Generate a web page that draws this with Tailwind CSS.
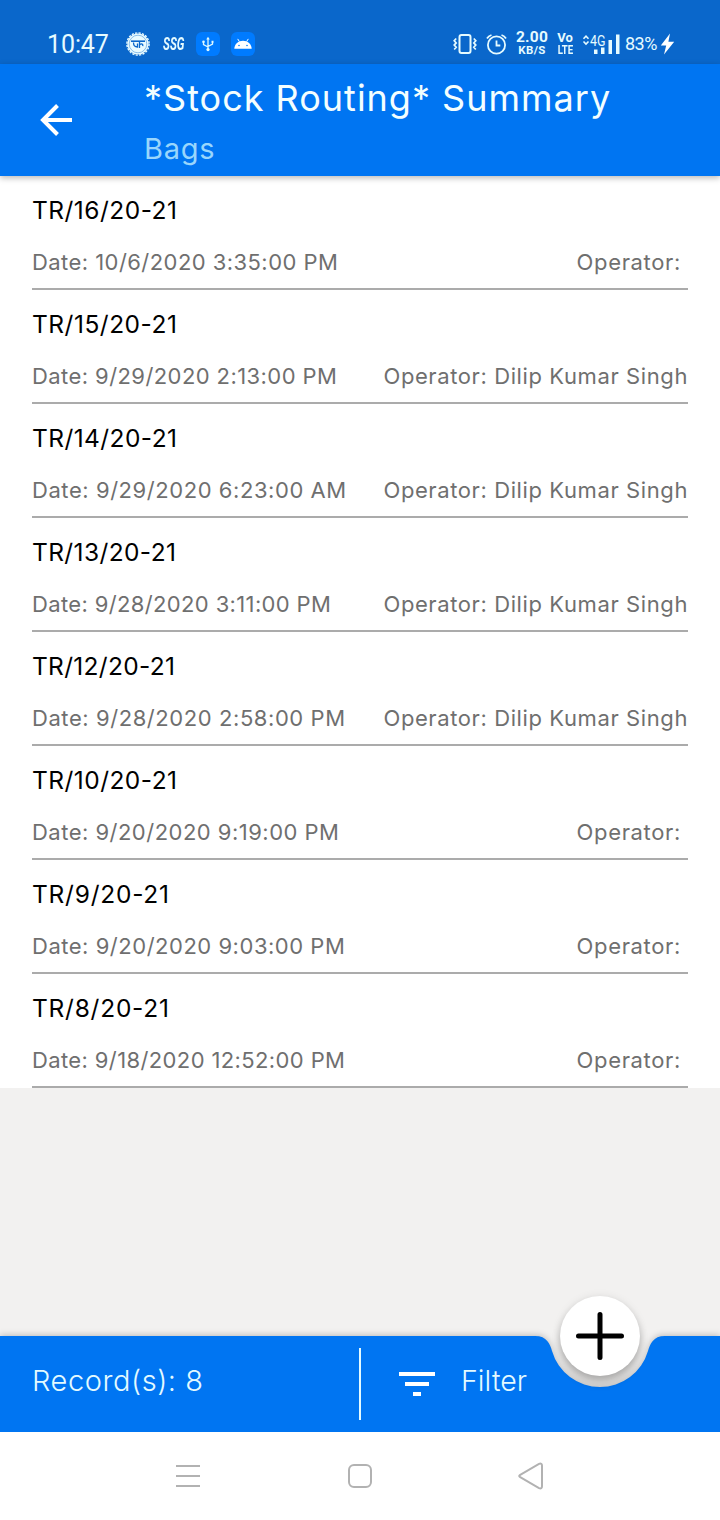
<!DOCTYPE html>
<html lang="en">
<head>
    <meta charset="UTF-8">
    <meta name="viewport" content="width=device-width, initial-scale=1.0">
    <title>Stock Routing Summary</title>
    <script src="https://cdn.jsdelivr.net/npm/@tailwindcss/browser@4"></script>
</head>
<body class="w-[720px] h-[1520px] flex flex-col overflow-hidden bg-[#f2f1f0] font-['Inter',sans-serif]">

    <!-- Status bar -->
    <div class="h-16 pt-6 pl-12 pr-[45px] flex items-center justify-between shrink-0 bg-[#0a67cb] text-[#e6fbff] font-['Roboto',sans-serif]">
        <div class="flex items-center">
            <span class="w-[79px] -ml-px text-[25px] leading-none tracking-[-0.1px] whitespace-nowrap">10:47</span>
            <svg class="w-6 h-6" viewBox="0 0 24 24">
                <circle cx="12" cy="12" r="10.6" fill="#e9fbff"/>
                <circle cx="12" cy="12" r="11.1" fill="none" stroke="#e9fbff" stroke-width="1.4" stroke-dasharray="2.200 1.300"/>
                <circle cx="12" cy="12" r="8.800" fill="none" stroke="#4a93dc" stroke-width=".6"/>
                <path d="M5 9.200h14" stroke="#0a67cb" stroke-width="1.600"/>
                <path d="M7.500 10.500c0 3.500 1.500 4.500 4 4.500V11.500M13.500 10v6M14 12.500c1.500-1.200 3.200-.5 2.800 1.700" fill="none" stroke="#0a67cb" stroke-width="1.300"/>
            </svg>
            <span class="ml-[13px] w-[21px] text-[18px] leading-none font-bold italic whitespace-nowrap"><span class="inline-block origin-left scale-x-[.64]">SSG</span></span>
            <div class="ml-3 w-6 h-6 rounded-md bg-[#007bff] flex items-center justify-center">
                <svg class="w-4 h-4" viewBox="0 0 16 16" fill="none" stroke="#dff9ff" stroke-width="1.3">
                    <path d="M8 2.500V13M3.500 6v2.500L8 11M12.500 6v2L8 10.500"/>
                    <path d="M8 .8l1.800 2.700H6.200zM11.500 4.700h2v2h-2z" fill="#dff9ff" stroke="none"/>
                    <circle cx="3.500" cy="5.700" r="1.300" fill="#dff9ff" stroke="none"/>
                    <circle cx="8" cy="13.600" r="1.600" fill="#dff9ff" stroke="none"/>
                </svg>
            </div>
            <div class="ml-[11px] w-6 h-6 rounded-md bg-[#007bff] flex items-center justify-center">
                <svg class="w-[18px] h-[12px]" viewBox="0 0 18 12">
                    <path d="M5.300 3.500L3.700.9M12.700 3.500L14.300.9" stroke="#fff" stroke-width="1" fill="none"/>
                    <path d="M.3 10.700C.6 5.800 4.300 2.700 9 2.700s8.400 3.100 8.700 8z" fill="#fff"/>
                    <circle cx="5" cy="7.500" r=".8" fill="#007bff"/><circle cx="13" cy="7.500" r=".8" fill="#007bff"/>
                </svg>
            </div>
        </div>
        <div class="flex items-center">
            <svg class="w-6 h-6" viewBox="0 0 24 24" fill="none" stroke="#e6fbff">
                <rect x="6.500" y="3" width="11" height="18" rx="2" stroke-width="2"/>
                <path d="M3.200 6.500l-2 2.200 2 2.200-2 2.200 2 2.200-2 2.200M20.800 6.500l2 2.200-2 2.200 2 2.200-2 2.200 2 2.200" stroke-width="1.700"/>
            </svg>
            <svg class="ml-2 w-[23px] h-6" viewBox="0 0 23 24" fill="none" stroke="#e6fbff" stroke-width="1.800">
                <circle cx="11.500" cy="13" r="8.600"/>
                <path d="M11.500 8.500v5h3.800M2 6.500Q3.500 4 6.500 3M21 6.500Q19.500 4 16.500 3"/>
            </svg>
            <div class="ml-2 w-[32px] flex flex-col items-center font-bold whitespace-nowrap">
                <span class="text-[15.500px] leading-[14px] tracking-[.2px] -mt-1">2.00</span>
                <span class="text-[11.500px] leading-[12px] tracking-[.4px] -mb-0.5">KB/S</span>
            </div>
            <div class="ml-[9px] w-[16px] flex flex-col items-center font-bold whitespace-nowrap">
                <span class="text-[13px] leading-[12px] -mt-1">Vo</span>
                <span class="text-[13px] leading-[12px] scale-x-[.74] -mb-1">LTE</span>
            </div>
            <svg class="ml-[9px] w-[39px] h-6" viewBox="0 0 39 24" fill="#e6fbff">
                <path d="M1.500 6.700L4 4.200l2.500 2.500M1.500 9.500L4 12l2.500-2.500" fill="none" stroke="#e6fbff" stroke-width="1.600"/>
                <text x="8" y="14" font-size="15" textLength="15.500" lengthAdjust="spacingAndGlyphs">4G</text>
                <path d="M12 17.500h3.500V22H12zM19 15.500h3.500V22H19zM26.500 8H30v14h-3.500zM34 2.500h3.500V22H34z"/>
            </svg>
            <span class="ml-1 w-[33px] text-[18px] leading-none tracking-[-0.500px] whitespace-nowrap">83%</span>
            <svg class="ml-[2px] w-[15px] h-6" viewBox="0 0 15 24" fill="#fff">
                <path d="M10 1.500L.8 13.500h5.400L4 22.500 14.200 9.800H8.400z"/>
            </svg>
        </div>
    </div>

    <!-- App bar -->
    <header class="relative z-10 h-28 pl-10 flex shrink-0 bg-[#0075f2] shadow-[0_2px_6px_rgba(0,0,0,0.28)]">
        <svg class="mt-10 w-8 h-8" viewBox="0 0 32 32" fill="none" stroke="#fff" stroke-width="4">
            <path d="M32 16H3M17.500 1.500L3 16l14.500 14.500"/>
        </svg>
        <div class="ml-[72px] pt-3 whitespace-nowrap">
            <h1 class="text-[36px] leading-[44px] tracking-[1px] text-[#f3feff]">*Stock Routing* Summary</h1>
            <p class="text-[29px] leading-[58px] tracking-[.7px] text-[#99d6fc]">Bags</p>
        </div>
    </header>

    <!-- Records -->
    <main class="h-[912px] px-8 shrink-0 bg-white whitespace-nowrap">
        <div class="h-[114px] border-b-2 border-[#ababab]">
            <h2 class="text-[24.500px] leading-[68px] tracking-[.480px] text-black">TR/16/20-21</h2>
            <div class="flex justify-between text-[22px] leading-[37px] text-[#6f6f6f]">
                <span class="tracking-[.440px]">Date: 10/6/2020 3:35:00 PM</span>
                <span class="tracking-[.650px] pr-[7px]">Operator:</span>
            </div>
        </div>
        <div class="h-[114px] border-b-2 border-[#ababab]">
            <h2 class="text-[24.500px] leading-[68px] tracking-[.510px] text-black">TR/15/20-21</h2>
            <div class="flex justify-between text-[22px] leading-[37px] text-[#6f6f6f]">
                <span class="tracking-[.420px]">Date: 9/29/2020 2:13:00 PM</span>
                <span class="tracking-[.600px]">Operator: Dilip Kumar Singh</span>
            </div>
        </div>
        <div class="h-[114px] border-b-2 border-[#ababab]">
            <h2 class="text-[24.500px] leading-[68px] tracking-[.420px] text-black">TR/14/20-21</h2>
            <div class="flex justify-between text-[22px] leading-[37px] text-[#6f6f6f]">
                <span class="tracking-[.560px]">Date: 9/29/2020 6:23:00 AM</span>
                <span class="tracking-[.600px]">Operator: Dilip Kumar Singh</span>
            </div>
        </div>
        <div class="h-[114px] border-b-2 border-[#ababab]">
            <h2 class="text-[24.500px] leading-[68px] tracking-[.390px] text-black">TR/13/20-21</h2>
            <div class="flex justify-between text-[22px] leading-[37px] text-[#6f6f6f]">
                <span class="tracking-[.360px]">Date: 9/28/2020 3:11:00 PM</span>
                <span class="tracking-[.600px]">Operator: Dilip Kumar Singh</span>
            </div>
        </div>
        <div class="h-[114px] border-b-2 border-[#ababab]">
            <h2 class="text-[24.500px] leading-[68px] tracking-[.310px] text-black">TR/12/20-21</h2>
            <div class="flex justify-between text-[22px] leading-[37px] text-[#6f6f6f]">
                <span class="tracking-[.570px]">Date: 9/28/2020 2:58:00 PM</span>
                <span class="tracking-[.600px]">Operator: Dilip Kumar Singh</span>
            </div>
        </div>
        <div class="h-[114px] border-b-2 border-[#ababab]">
            <h2 class="text-[24.500px] leading-[68px] tracking-[.460px] text-black">TR/10/20-21</h2>
            <div class="flex justify-between text-[22px] leading-[37px] text-[#6f6f6f]">
                <span class="tracking-[.480px]">Date: 9/20/2020 9:19:00 PM</span>
                <span class="tracking-[.650px] pr-[7px]">Operator:</span>
            </div>
        </div>
        <div class="h-[114px] border-b-2 border-[#ababab]">
            <h2 class="text-[24.500px] leading-[68px] tracking-[.760px] text-black">TR/9/20-21</h2>
            <div class="flex justify-between text-[22px] leading-[37px] text-[#6f6f6f]">
                <span class="tracking-[.520px]">Date: 9/20/2020 9:03:00 PM</span>
                <span class="tracking-[.650px] pr-[7px]">Operator:</span>
            </div>
        </div>
        <div class="h-[114px] border-b-2 border-[#ababab]">
            <h2 class="text-[24.500px] leading-[68px] tracking-[.760px] text-black">TR/8/20-21</h2>
            <div class="flex justify-between text-[22px] leading-[37px] text-[#6f6f6f]">
                <span class="tracking-[.380px]">Date: 9/18/2020 12:52:00 PM</span>
                <span class="tracking-[.650px] pr-[7px]">Operator:</span>
            </div>
        </div>
    </main>

    <!-- Bottom app bar -->
    <footer class="relative mt-auto h-24 shrink-0 text-[#e3faff] font-light whitespace-nowrap">
        <!-- bar shape, notched for the add button -->
        <svg class="absolute inset-0 w-[720px] h-24 overflow-visible drop-shadow-[0_-1px_3px_rgba(0,0,0,0.22)]" viewBox="0 0 720 96">
            <path d="M0 0H535C547 0 550 8 552 15A50 50 0 0 0 648 15C650 8 653 0 665 0H720V96H0Z" fill="#0075f2"/>
        </svg>
        <div class="relative h-full flex items-center pl-8">
            <span class="w-[327px] -mt-1.5 text-[29px] tracking-[.560px]">Record(s): 8</span>
            <div class="w-0.5 h-[72px] bg-[#e3faff]"></div>
            <svg class="ml-[38px] w-9 h-6" viewBox="0 0 36 24" fill="#fff">
                <path d="M0 0h36v4H0zM6 10h24v4H6zM14 20h8v4h-8z"/>
            </svg>
            <span class="ml-[26px] -mt-1.5 text-[28.500px] tracking-[.100px]">Filter</span>
        </div>
        <button class="absolute left-[560px] -top-10 w-20 h-20 rounded-full bg-white flex items-center justify-center shadow-[0_7px_8px_rgba(0,0,0,0.24),0_1px_10px_rgba(0,0,0,0.10)]">
            <svg class="w-12 h-12" viewBox="0 0 48 48" fill="none" stroke="#000" stroke-width="5" stroke-linecap="round">
                <path d="M24 2.500v43M2.500 24h43"/>
            </svg>
        </button>
    </footer>

    <!-- System navigation -->
    <nav class="relative h-[88px] shrink-0 bg-white flex items-center pl-[176px]">
        <svg class="w-6 h-6" viewBox="0 0 24 24" stroke="#b2b2b2" stroke-width="2">
            <path d="M0 2h24M0 12h24M0 22h24"/>
        </svg>
        <svg class="ml-[148px] w-6 h-6" viewBox="0 0 24 24" fill="none" stroke="#b2b2b2" stroke-width="2">
            <rect x="1" y="1" width="22" height="22" rx="5"/>
        </svg>
        <svg class="ml-[146px] w-[26px] h-7" viewBox="0 0 26 28" fill="none" stroke="#b2b2b2" stroke-width="2">
            <path d="M2.200 12.800L21 1.900Q24 .8 24 3.800V24.200Q24 27.200 21 26.100L2.200 15.200Q.2 14 2.200 12.800Z"/>
        </svg>
    </nav>
</body>
</html>
